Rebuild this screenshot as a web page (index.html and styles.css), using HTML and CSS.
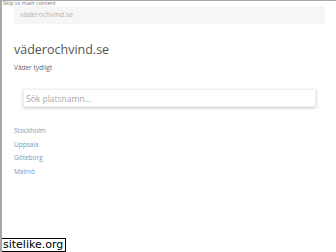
FILE: index.html
```html
<!DOCTYPE html>
<html lang="sv">
  <head>
    <meta charset="UTF-8" />
    <meta name="viewport" content="width=device-width, initial-scale=1.0" />
    <title>väderochvind.se</title>
    <link rel="stylesheet" href="styles.css">
  </head>
  <body>
    <div class="frame">
      <a href="#main" class="skip">Skip to main content</a>
      <div class="topbar">väderochvind.se</div>
      <div class="main" id="main">
        <h1 class="title">väderochvind.se</h1>
        <p class="tagline">Väder tydligt</p>
        <div class="search">
          <input type="text" placeholder="Sök platsnamn..." />
        </div>
        <ul class="places">
          <li><a href="#">Stockholm</a></li>
          <li><a href="#">Uppsala</a></li>
          <li><a href="#">Göteborg</a></li>
          <li><a href="#">Malmö</a></li>
        </ul>
      </div>
      <div class="badge">sitelike.org</div>
    </div>
  </body>
</html>
```
FILE: styles.css
```css
body {
  margin: 0;
  font-family: "Open Sans", "Noto Sans", sans-serif;
  background: #fff;
}

.frame {
  position: relative;
  height: 251px;
  border-top: 1px solid #a8a8a8;
  border-left: 2px solid #a8a8a8;
  overflow: hidden;
}

.skip {
  display: block;
  height: 5px;
  font-size: 5.5px;
  line-height: 5px;
  color: #777;
  text-decoration: none;
  padding-left: 1px;
}

.topbar {
  margin: 0 11px 0 12px;
  height: 18px;
  background: #f6f6f6;
  padding-left: 6px;
  font-size: 7px;
  line-height: 18px;
  color: #b5b5b5;
}

.main {
  padding-left: 12px;
}

.title {
  margin: 18px 0 0;
  font-size: 12.5px;
  font-weight: 400;
  line-height: 16px;
  color: #555;
}

.tagline {
  margin: 5px 0 0;
  font-size: 6.5px;
  line-height: 9px;
  color: #666;
}

.search {
  margin: 17px 20px 0 9px;
}

.search input {
  display: block;
  box-sizing: border-box;
  width: 100%;
  height: 18px;
  border: 1px solid #f0f0f0;
  box-shadow: 0 1px 3px rgba(0, 0, 0, 0.22);
  padding: 0 2px;
  font-family: inherit;
  font-size: 8.5px;
  color: #555;
  outline: none;
}

.search input::placeholder {
  color: #a8a8a8;
}

.places {
  list-style: none;
  margin: 17px 0 0;
  padding: 0;
}

.places li {
  height: 13.5px;
  font-size: 6.5px;
  line-height: 13.5px;
}

.places a {
  color: #7c98b8;
  text-decoration: none;
}

.badge {
  position: absolute;
  left: -2px;
  bottom: 0;
  padding: 0 2px;
  border: 1px solid #000;
  background: #fff;
  font-family: "DejaVu Sans", sans-serif;
  font-size: 11px;
  line-height: 12px;
  color: #000;
}
```
